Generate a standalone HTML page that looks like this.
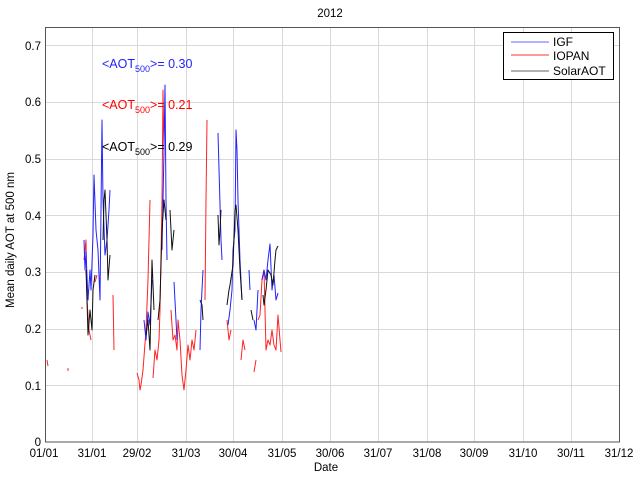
<!DOCTYPE html>
<html><head><meta charset="utf-8"><style>
body{margin:0;background:#fff;}
svg{display:block;font-family:"Liberation Sans",sans-serif;}
</style></head><body>
<svg width="640" height="480" viewBox="0 0 640 480">
<rect width="640" height="480" fill="#fff"/>
<g stroke="#d9d9d9" stroke-width="1">
<line x1="92.5" y1="27" x2="92.5" y2="442"/><line x1="137.5" y1="27" x2="137.5" y2="442"/><line x1="186.5" y1="27" x2="186.5" y2="442"/><line x1="233.5" y1="27" x2="233.5" y2="442"/><line x1="282.5" y1="27" x2="282.5" y2="442"/><line x1="330.5" y1="27" x2="330.5" y2="442"/><line x1="378.5" y1="27" x2="378.5" y2="442"/><line x1="427.5" y1="27" x2="427.5" y2="442"/><line x1="474.5" y1="27" x2="474.5" y2="442"/><line x1="523.5" y1="27" x2="523.5" y2="442"/><line x1="571.5" y1="27" x2="571.5" y2="442"/>
<line x1="45" y1="385.5" x2="619" y2="385.5"/><line x1="45" y1="329.5" x2="619" y2="329.5"/><line x1="45" y1="272.5" x2="619" y2="272.5"/><line x1="45" y1="215.5" x2="619" y2="215.5"/><line x1="45" y1="159.5" x2="619" y2="159.5"/><line x1="45" y1="102.5" x2="619" y2="102.5"/><line x1="45" y1="45.5" x2="619" y2="45.5"/>
</g>
<rect x="45.5" y="27.5" width="574" height="414.5" fill="none" stroke="#555" stroke-width="1"/>
<g fill="none" stroke-width="1" stroke-linejoin="round">
<g stroke="#f22">
<polyline points="47,360 48,366"/>
<polyline points="68,368 68,371"/>
<polyline points="82,307 82,309"/>
<polyline points="84,260 86,240 87,300 89,330 91,340"/>
<polyline points="95,282 97,275"/>
<polyline points="113,295 114,350"/>
<polyline points="137,373 139,380 140,390 141,385 143,370 146,330 148,280 150,200"/>
<polyline points="153,378 155,350 157,360 159,340 160,310 162,200 163,90 164,150"/>
<polyline points="171,310 173,340 175,335 177,350 178,320 180,340 182,375 184,390 186,370 188,345 190,360 192,340 194,350 196,330"/>
<polyline points="205,300 206,200 207,120"/>
<polyline points="227,320 229,340 231,330"/>
<polyline points="254,372 256,360"/>
<polyline points="241,360 243,340 245,350"/>
<polyline points="258,320 260,315 262,280 264,270 266,350 268,340 270,345 272,330 274,345 276,350 278,315 280,340 281,352"/>
</g>
<g stroke="#22f">
<polyline points="84,240 85,270 86,252 88,300 90,270 91,290 93,235 94,175 96,230 98,250 100,300 102,120 103,200 105,255 107,240 109,210 110,190"/>
<polyline points="144,320 146,340 148,312 150,325 152,280"/>
<polyline points="162,250 164,150 165,85 166,200 167,260"/>
<polyline points="174,282 176,320 177,340"/>
<polyline points="200,350 201,310 203,270"/>
<polyline points="218,133 221,240 222,260"/>
<polyline points="228,325 230,310 232,290 233,250 235,230 236,130 237,150 238,200 240,260 242,300"/>
<polyline points="249,270 250,290"/>
<polyline points="254,320 256,330 257,310 258,290"/>
<polyline points="262,280 264,270 266,280 268,260 270,244 272,290 274,275 276,300 278,293"/>
</g>
<g stroke="#111">
<polyline points="86,270 87,300 88,335 90,310 92,330 93,290 95,275"/>
<polyline points="103,240 104,200 105,190 107,240 108,280 110,255"/>
<polyline points="146,335 148,320 150,350 152,260 154,310"/>
<polyline points="158,320 160,300 162,230 164,200 166,220"/>
<polyline points="170,210 172,250 174,230"/>
<polyline points="200,300 202,305 203,320"/>
<polyline points="218,215 219,245 220,230 221,210"/>
<polyline points="227,305 229,290 230,285 233,265 235,210 236,205 238,230 240,270 242,300"/>
<polyline points="251,310 253,320"/>
<polyline points="263,295 264,305 266,290 268,270 271,275 273,285 275,260 276,250 278,246"/>
</g>
</g>
<g font-size="11.5" fill="#000" text-anchor="end">
<text x="41" y="446">0</text><text x="41" y="390">0.1</text><text x="41" y="333">0.2</text><text x="41" y="276">0.3</text><text x="41" y="220">0.4</text><text x="41" y="163">0.5</text><text x="41" y="106">0.6</text><text x="41" y="50">0.7</text>
</g>
<g font-size="11.5" fill="#000" text-anchor="middle">
<text x="44" y="457">01/01</text><text x="92" y="457">31/01</text><text x="137" y="457">29/02</text><text x="186" y="457">31/03</text><text x="233" y="457">30/04</text><text x="282" y="457">31/05</text><text x="330" y="457">30/06</text><text x="378" y="457">31/07</text><text x="427" y="457">31/08</text><text x="474" y="457">30/09</text><text x="523" y="457">31/10</text><text x="571" y="457">30/11</text><text x="619" y="457">31/12</text>
<text x="326" y="471">Date</text>
<text x="330" y="17">2012</text>
<text transform="translate(14,240) rotate(-90)">Mean daily AOT at 500 nm</text>
</g>
<g font-size="12.5">
<text x="102" y="68" fill="#22f">&lt;AOT<tspan font-size="9" dy="4">500</tspan><tspan dy="-4">&gt;= 0.30</tspan></text>
<text x="102" y="109" fill="#f00">&lt;AOT<tspan font-size="9" dy="4">500</tspan><tspan dy="-4">&gt;= 0.21</tspan></text>
<text x="102" y="151" fill="#000">&lt;AOT<tspan font-size="9" dy="4">500</tspan><tspan dy="-4">&gt;= 0.29</tspan></text>
</g>
<rect x="503.5" y="32.5" width="110" height="47" fill="#fff" stroke="#000"/>
<line x1="511" y1="42" x2="549" y2="42" stroke="#66f"/>
<line x1="511" y1="55" x2="549" y2="55" stroke="#f99" stroke-width="2"/>
<line x1="511" y1="71" x2="549" y2="71" stroke="#666"/>
<g font-size="12"><text x="553" y="46">IGF</text><text x="553" y="60">IOPAN</text><text x="553" y="75">SolarAOT</text></g>
</svg>
</body></html>
